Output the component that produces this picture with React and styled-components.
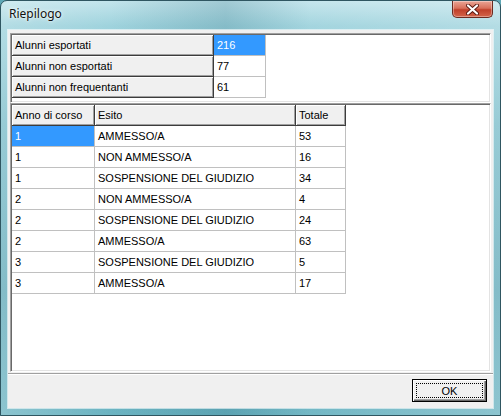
import React from 'react';
import styled, { createGlobalStyle } from 'styled-components';

const GlobalStyle = createGlobalStyle`
  html, body {
    margin: 0;
    padding: 0;
    background: #5ea8b7;
  }
  body {
    font-family: "Liberation Sans", Arial, sans-serif;
  }
`;

const Window = styled.div`
  width: 501px;
  height: 416px;
  box-sizing: border-box;
  display: flex;
  flex-direction: column;
  border: 1px solid #2f5661;
  border-radius: 7px 7px 0 0;
  overflow: hidden;
  background:
    linear-gradient(90deg, rgba(255, 255, 255, 0.22) 0%, rgba(255, 255, 255, 0) 22%, rgba(30, 95, 115, 0.2) 45%, rgba(255, 255, 255, 0.05) 62%, rgba(255, 255, 255, 0.22) 100%),
    linear-gradient(180deg, #c3e5ec 0%, #9fd3dd 6%, #7bbdca 30%, #62aab9 70%, #6cb4c2 100%);
`;

const TitleBar = styled.div`
  height: 29px;
  flex: none;
  display: flex;
  align-items: flex-start;
  justify-content: space-between;
  padding-left: 8px;
`;

const Title = styled.span`
  margin-top: 5px;
  font-family: "Noto Sans", "Open Sans", sans-serif;
  font-size: 12px;
  line-height: 16px;
  color: #111;
  text-shadow: 0 0 5px rgba(255, 255, 255, 0.9), 0 0 2px rgba(255, 255, 255, 0.9);
`;

const CloseButton = styled.div`
  width: 41px;
  height: 17px;
  margin-right: 7px;
  box-sizing: border-box;
  display: flex;
  align-items: center;
  justify-content: center;
  border: 1px solid #6b2a20;
  border-top: none;
  border-radius: 0 0 5px 5px;
  background: linear-gradient(180deg, #eaa696 0%, #d8705a 45%, #c0402a 55%, #d3644a 100%);
  box-shadow: inset 0 0 0 1px rgba(255, 255, 255, 0.35);
`;

const Client = styled.div`
  flex: 1;
  margin: 0 7px 7px;
  display: flex;
  flex-direction: column;
  background: #f0f0f0;
  box-shadow: 0 0 0 1px rgba(255, 255, 255, 0.6);
`;

const SunkenPanel = styled.div`
  box-sizing: border-box;
  margin: ${p => p.$margin};
  padding: 1px;
  background: #fff;
  border: 1px solid;
  border-color: #a0a0a0 #fff #fff #a0a0a0;
  box-shadow: inset 1px 1px 0 #696969, inset -1px -1px 0 #e3e3e3;
  ${p => (p.$grow ? 'flex: 1;' : `height: ${p.$height}px;`)}
`;

const Grid = styled.div`
  display: grid;
  grid-template-columns: ${p => p.$cols};
  grid-auto-rows: 21px;
`;

const Cell = styled.div`
  box-sizing: border-box;
  padding: 0 3px;
  font-size: 11px;
  line-height: 21px;
  white-space: nowrap;
  overflow: hidden;
  border-right: 1px solid ${p => (p.$fixed ? '#3c3c3c' : '#c0c0c0')};
  border-bottom: 1px solid ${p => (p.$fixed ? '#3c3c3c' : '#c0c0c0')};
  background: ${p => (p.$selected ? '#3399ff' : p.$fixed ? '#f0f0f0' : '#fff')};
  color: ${p => (p.$selected ? '#fff' : '#000')};
  box-shadow: ${p => (p.$fixed ? 'inset 1px 1px 0 #fff, inset -1px -1px 0 #a0a0a0' : 'none')};
`;

const BottomBar = styled.div`
  height: 35px;
  flex: none;
  box-sizing: border-box;
  display: flex;
  justify-content: flex-end;
  align-items: flex-start;
  padding: 5px 6px 0 0;
  border-top: 1px solid #a0a0a0;
  box-shadow: inset 0 1px 0 #fff;
`;

const OkButton = styled.button`
  position: relative;
  width: 75px;
  height: 23px;
  box-sizing: border-box;
  padding: 0;
  border: 1px solid #000;
  background: #f0f0f0;
  box-shadow: inset 1px 1px 0 #fff, inset -1px -1px 0 #696969, inset -2px -2px 0 #a0a0a0;
  font-family: "Liberation Sans", Arial, sans-serif;
  font-size: 11px;
  color: #000;

  &::after {
    content: "";
    position: absolute;
    inset: 3px;
    border: 1px dotted #000;
  }
`;

const summary = [
  ['Alunni esportati', '216'],
  ['Alunni non esportati', '77'],
  ['Alunni non frequentanti', '61'],
];

const results = [
  ['1', 'AMMESSO/A', '53'],
  ['1', 'NON AMMESSO/A', '16'],
  ['1', 'SOSPENSIONE DEL GIUDIZIO', '34'],
  ['2', 'NON AMMESSO/A', '4'],
  ['2', 'SOSPENSIONE DEL GIUDIZIO', '24'],
  ['2', 'AMMESSO/A', '63'],
  ['3', 'SOSPENSIONE DEL GIUDIZIO', '5'],
  ['3', 'AMMESSO/A', '17'],
];

function CloseGlyph() {
  return (
    <svg width="13" height="11" viewBox="0 0 13 11">
      <path d="M2 1.5 L11 9.5 M11 1.5 L2 9.5" stroke="#5a1a12" strokeWidth="4" strokeLinecap="round" />
      <path d="M2 1.5 L11 9.5 M11 1.5 L2 9.5" stroke="#fff" strokeWidth="2.2" strokeLinecap="round" />
    </svg>
  );
}

export default function App() {
  return (
    <>
      <GlobalStyle />
      <Window>
        <TitleBar>
          <Title>Riepilogo</Title>
          <CloseButton>
            <CloseGlyph />
          </CloseButton>
        </TitleBar>
        <Client>
          <SunkenPanel $margin="3px 2px 0" $height={70}>
            <Grid $cols="202px 52px">
              {summary.map(([label, value], i) => (
                <React.Fragment key={label}>
                  <Cell $fixed>{label}</Cell>
                  <Cell $selected={i === 0}>{value}</Cell>
                </React.Fragment>
              ))}
            </Grid>
          </SunkenPanel>
          <SunkenPanel $margin="0 2px 1px" $grow>
            <Grid $cols="83px 201px 50px">
              <Cell $fixed>Anno di corso</Cell>
              <Cell $fixed>Esito</Cell>
              <Cell $fixed>Totale</Cell>
              {results.map((row, i) =>
                row.map((v, j) => (
                  <Cell key={`${i}-${j}`} $selected={i === 0 && j === 0}>
                    {v}
                  </Cell>
                ))
              )}
            </Grid>
          </SunkenPanel>
          <BottomBar>
            <OkButton>OK</OkButton>
          </BottomBar>
        </Client>
      </Window>
    </>
  );
}
